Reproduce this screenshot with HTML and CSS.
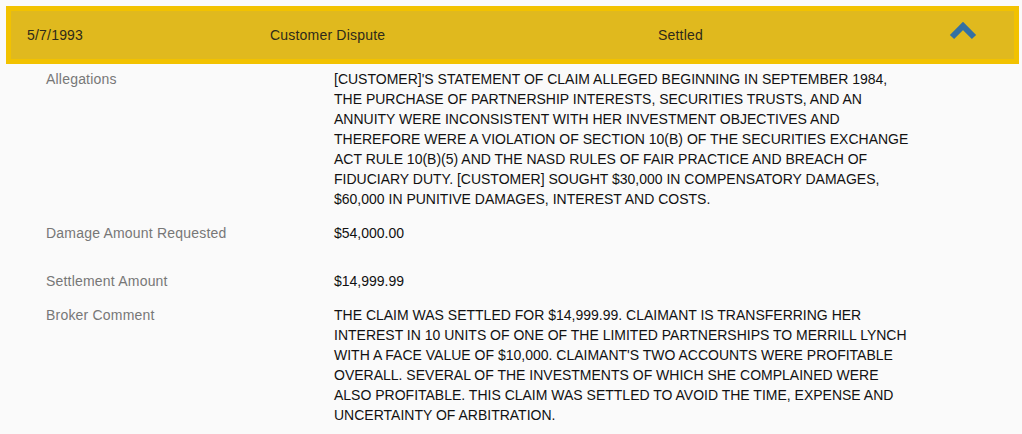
FILE: index.html
```html
<!DOCTYPE html>
<html>
<head>
<meta charset="utf-8">
<link rel="stylesheet" href="styles.css">
</head>
<body>
<div class="panel">
  <div class="head">
    <div class="hcell date">5/7/1993</div>
    <div class="hcell type">Customer Dispute</div>
    <div class="hcell status">Settled</div>
    <div class="toggle">
      <svg width="28" height="18" viewBox="0 0 28 18"><polyline points="3,15 14,4 25,15" fill="none" stroke="#3470a3" stroke-width="6"/></svg>
    </div>
  </div>
  <div class="details">
    <div class="row">
      <div class="label">Allegations</div>
      <div class="value">[CUSTOMER]'S STATEMENT OF CLAIM ALLEGED BEGINNING IN SEPTEMBER 1984, THE PURCHASE OF PARTNERSHIP INTERESTS, SECURITIES TRUSTS, AND AN ANNUITY WERE INCONSISTENT WITH HER INVESTMENT OBJECTIVES AND THEREFORE WERE A VIOLATION OF SECTION 10(B) OF THE SECURITIES EXCHANGE ACT RULE 10(B)(5) AND THE NASD RULES OF FAIR PRACTICE AND BREACH OF FIDUCIARY DUTY. [CUSTOMER] SOUGHT $30,000 IN COMPENSATORY DAMAGES, $60,000 IN PUNITIVE DAMAGES, INTEREST AND COSTS.</div>
    </div>
    <div class="row tall">
      <div class="label">Damage Amount Requested</div>
      <div class="value">$54,000.00</div>
    </div>
    <div class="row">
      <div class="label">Settlement Amount</div>
      <div class="value">$14,999.99</div>
    </div>
    <div class="row">
      <div class="label">Broker Comment</div>
      <div class="value">THE CLAIM WAS SETTLED FOR $14,999.99. CLAIMANT IS TRANSFERRING HER INTEREST IN 10 UNITS OF ONE OF THE LIMITED PARTNERSHIPS TO MERRILL LYNCH WITH A FACE VALUE OF $10,000. CLAIMANT'S TWO ACCOUNTS WERE PROFITABLE OVERALL. SEVERAL OF THE INVESTMENTS OF WHICH SHE COMPLAINED WERE ALSO PROFITABLE. THIS CLAIM WAS SETTLED TO AVOID THE TIME, EXPENSE AND UNCERTAINTY OF ARBITRATION.</div>
    </div>
  </div>
</div>
</body>
</html>
```
FILE: styles.css
```css
html, body {
  margin: 0;
  padding: 0;
  background: #fafafa;
}
body {
  font-family: "Liberation Sans", Arial, sans-serif;
  font-size: 14px;
  line-height: 20px;
  padding: 6px 3px 0 6px;
}
.head {
  display: grid;
  grid-template-columns: 243px 388px 1fr 65px;
  align-items: center;
  height: 48px;
  background: #e0b91e;
  border: 5px solid #f2c200;
  padding-left: 16px;
  color: #2e2a1a;
  letter-spacing: 0.2px;
}
.toggle {
  display: flex;
  justify-content: flex-start;
  padding-bottom: 8px;
}
.toggle svg { display: block; }
.details {
  padding: 5px 0 0 40px;
}
.row {
  display: grid;
  grid-template-columns: 288px 575px;
  padding: 0 0 14px 0;
}
.row.tall {
  padding-bottom: 28px;
}
.label {
  color: #777;
  letter-spacing: 0.2px;
}
.value {
  color: #111;
}
```
